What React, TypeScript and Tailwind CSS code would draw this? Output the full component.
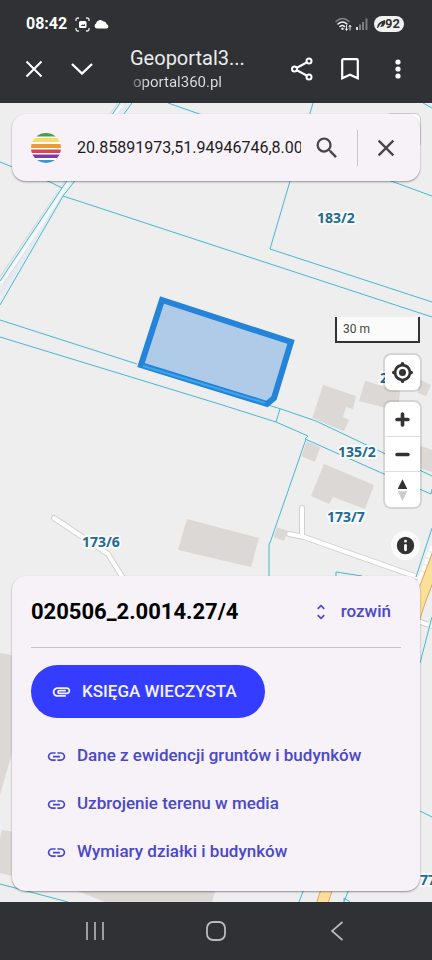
import type { ReactNode } from "react";
import { MdAttachment, MdClose, MdLink, MdSearch, MdUnfoldMore } from "react-icons/md";

const links = [
  "Dane z ewidencji gruntów i budynków",
  "Uzbrojenie terenu w media",
  "Wymiary działki i budynków",
];

const parcelLabels = [
  { x: 317, y: 223, text: "183/2" },
  { x: 380, y: 383, text: "20" },
  { x: 338, y: 457, text: "135/2" },
  { x: 327, y: 522, text: "173/7" },
  { x: 82, y: 547, text: "173/6" },
  { x: 420, y: 885, text: "77" },
];

const buildings = [
  "323,385 356,396 353,409 346,407 343,417 349,420 344,431 312,419",
  "365,381 400,391 398,411 359,401",
  "419,379 431,385 426,396 418,393",
  "418,445 432,450 432,472 418,468",
  "324,464 374,485 365,509 333,497 329,504 311,496",
  "306,440 321,445 315,462 301,456",
  "187,519 259,538 251,567 178,550",
  "276,527 288,531 284,541 273,537",
  "0,653 20,657 20,725 0,795",
  "2,830 30,834 30,880 0,873 0,838",
  "70,888 216,888 212,902 105,902",
];

const boundaries = [
  "120,103 62,188 0,281",
  "132,103 74,182 63,196 0,305",
  "63,196 432,317",
  "0,162 50,182 62,188",
  "168,103 391,181 432,196",
  "423,103 432,108",
  "313,103 270,249 432,302",
  "0,320 137,364",
  "0,337 216,403 276,422 308,436",
  "268,405 281,409 316,421 432,476",
  "280,409 276,422",
  "308,436 305,439 384,474 431,494 432,489",
  "306,439 271,540 269,545 269,580",
  "432,528 416,577",
  "336,580 336,572 362,576",
  "432,617 420,663",
  "420,811 432,817",
  "304,889 299,902",
  "349,889 344,902 344,898 350,902",
  "0,884 68,902",
];

function ParcelMap() {
  return (
    <svg
      className="absolute inset-0 h-full w-full bg-[#eeeeee]"
      viewBox="0 103 432 799"
      preserveAspectRatio="xMidYMid slice"
      role="img"
      aria-label="Mapa działek"
    >
      <path d="M122 103 L66 186 L0 283" fill="none" stroke="#cfd3d3" strokeWidth="8" />
      <path d="M122 103 L66 186 L0 283" fill="none" stroke="#f5f9f9" strokeWidth="6" />
      <path d="M127 103 L69 188 L0 294" fill="none" stroke="#e6e9f2" strokeWidth="4" />
      {buildings.map((points) => (
        <polygon key={points} points={points} fill="#dcd8d6" />
      ))}
      <g fill="none" strokeLinecap="round" strokeLinejoin="round">
        <g stroke="#d3d0ce" strokeWidth="6">
          <path d="M54 518 L108 554 L128 586" />
          <path d="M289 534 L304 537 L420 578" />
          <path d="M302 508 V536" />
          <path d="M414 620 L436 627" />
        </g>
        <g stroke="#ffffff" strokeWidth="4">
          <path d="M54 518 L108 554 L128 586" />
          <path d="M289 534 L304 537 L420 578" />
          <path d="M302 508 V536" />
          <path d="M414 620 L436 627" />
        </g>
      </g>
      <path d="M436 540 L418 588" stroke="#ffffff" strokeWidth="6" strokeDasharray="5 2" />
      <g fill="none">
        <path d="M440 548 L420 601 L322 904" stroke="#e3a565" strokeWidth="12" />
        <path d="M440 548 L420 601 L322 904" stroke="#fbe09a" strokeWidth="10" />
      </g>
      <g fill="none" stroke="#dbf3f7" strokeWidth="3">
        {boundaries.map((points) => (
          <polyline key={points} points={points} />
        ))}
      </g>
      <g fill="none" stroke="#69adbc" strokeWidth="1">
        {boundaries.map((points) => (
          <polyline key={points} points={points} />
        ))}
      </g>
      <polygon
        points="162,300 291,342 274,398 267,404 141,365"
        fill="#b0cbe7"
        stroke="#2484d9"
        strokeWidth="6"
      />
      <path d="M143 366 L265 403" stroke="#3fa6ea" strokeWidth="2" />
      <g
        className="font-['Noto_Sans',sans-serif] text-[14px] font-bold"
        fill="#28688e"
        stroke="#f6fbfd"
        strokeWidth="4"
        strokeLinejoin="round"
        paintOrder="stroke"
      >
        {parcelLabels.map((label) => (
          <text key={label.text} x={label.x} y={label.y}>
            {label.text}
          </text>
        ))}
      </g>
    </svg>
  );
}

function StatusBar() {
  return (
    <div className="flex h-12 items-center pr-7 pl-[26px]">
      <span className="text-base font-bold">08:42</span>
      <svg className="ml-2 size-[15px]" viewBox="0 0 15 15" fill="none" stroke="#e8e8e8" aria-hidden="true">
        <path d="M1 4V3Q1 1 3 1H4 M11 1H12Q14 1 14 3V4 M14 11V12Q14 14 12 14H11 M4 14H3Q1 14 1 12V11" strokeWidth="1.3" />
        <path fillRule="evenodd" d="M4 5.5Q4 4 5.5 4H10Q11.5 4 11.5 5.5V9.5Q11.5 11 10 11H5.500Q4 11 4 9.500Z M5.500 9H10V7L8.500 8L7.500 7.500Z" fill="#fff" stroke="none" />
      </svg>
      <svg className="ml-1 h-[10px] w-[15px]" viewBox="0 0 15 10" fill="#fff" aria-hidden="true">
        <path d="M3 9.500A2.600 2.600 0 0 1 2 4.600A4.300 4.300 0 0 1 9.500 2.500A3 3 0 0 1 12.500 5.300A2.200 2.200 0 0 1 13 9.500Z" />
      </svg>
      <svg className="ml-auto h-[15px] w-[17px]" viewBox="0 0 17 15" fill="none" strokeLinecap="round" aria-hidden="true">
        <path d="M1 4.500Q7.500 -1.500 14 4.500" stroke="#85878a" strokeWidth="1.500" />
        <path d="M3 7Q7.500 3 12 7 M5 9.500Q7.500 7.500 9.500 9.500" stroke="#eee" strokeWidth="1.600" />
        <circle cx="7.500" cy="11.800" r="1.200" fill="#eee" />
        <path d="M11.500 8.500V13 M10.200 11.800L11.500 13.300L12.800 11.800 M15 13V8.500 M13.800 9.800L15 8.300L16.200 9.800" stroke="#eee" strokeWidth="1" />
      </svg>
      <svg className="ml-1 h-[12px] w-[12px]" viewBox="0 0 12 12" aria-hidden="true">
        <rect x="0" y="9" width="2" height="3" fill="#ddd" />
        <rect x="3" y="6.500" width="2" height="5.500" fill="#7b7d80" />
        <rect x="6" y="4" width="2" height="8" fill="#7b7d80" />
        <rect x="9.500" y="0.500" width="2" height="11.500" fill="#7b7d80" />
      </svg>
      <span className="ml-1.5 flex h-4 items-center rounded-full bg-[#f1f1f1] pr-1 pl-[3px] text-[13px] leading-4 font-bold text-[#2f3135]">
        <svg className="size-2" viewBox="0 0 8 8" fill="#2f3135" aria-hidden="true">
          <path d="M0 8Q0 2 8 0Q9 7 3 7Q5 5 5 3Q2 5 1 8Z" />
        </svg>
        92
      </span>
    </div>
  );
}

function BrowserBar() {
  return (
    <div className="flex h-[55px] items-start pr-4 pl-4">
      <button type="button" aria-label="Zamknij kartę" className="mt-[3px] flex size-9 items-center justify-center">
        <svg className="size-[18px]" viewBox="0 0 18 18" fill="none" stroke="#fff" strokeWidth="2" aria-hidden="true">
          <path d="M1.500 1.500L16.500 16.500M16.500 1.500L1.500 16.500" />
        </svg>
      </button>
      <button type="button" aria-label="Minimalizuj" className="mt-[3px] ml-3 flex size-9 items-center justify-center">
        <svg className="h-3 w-[22px]" viewBox="0 0 22 12" fill="none" stroke="#fff" strokeWidth="2.400" aria-hidden="true">
          <path d="M1 1L11 10.500L21 1" />
        </svg>
      </button>
      <div className="ml-[30px] min-w-0 flex-1">
        <p className="-mt-0.5 truncate text-xl leading-6 text-[#ececec]">Geoportal3...</p>
        <p className="flex h-6 items-center pl-[3px] text-[15px]">
          <span className="bg-linear-to-r from-[#707276] to-[#e0e0e0] to-15% bg-clip-text text-transparent">oportal360.pl</span>
        </p>
      </div>
      <button type="button" aria-label="Udostępnij" className="mt-[3px] flex size-9 items-center justify-center">
        <svg className="size-6" viewBox="0 0 24 24" fill="none" stroke="#fff" strokeWidth="2" aria-hidden="true">
          <path d="M6.500 11L17.500 5M6.500 13L17.500 19" />
          <circle cx="4.500" cy="12" r="2.500" />
          <circle cx="19" cy="4" r="2.500" />
          <circle cx="19" cy="20" r="2.500" />
        </svg>
      </button>
      <button type="button" aria-label="Dodaj zakładkę" className="mt-[3px] ml-3 flex size-9 items-center justify-center">
        <svg className="h-[22px] w-[18px]" viewBox="0 0 18 22" fill="none" stroke="#fff" strokeWidth="2.200" aria-hidden="true">
          <path d="M1.200 20.300V2.500Q1.200 1.200 2.500 1.200H15.500Q16.800 1.200 16.800 2.500V20.300L9 16.800Z" />
        </svg>
      </button>
      <button type="button" aria-label="Więcej opcji" className="mt-[3px] ml-3 flex size-9 items-center justify-center">
        <svg className="h-5 w-[6px]" viewBox="0 0 6 20" fill="#fff" aria-hidden="true">
          <circle cx="3" cy="3" r="2.600" />
          <circle cx="3" cy="10" r="2.600" />
          <circle cx="3" cy="17" r="2.600" />
        </svg>
      </button>
    </div>
  );
}

function Logo() {
  return (
    <svg className="size-[30px] shrink-0" viewBox="0 0 30 30" aria-hidden="true">
      <clipPath id="sun">
        <circle cx="15" cy="15" r="15" />
      </clipPath>
      <g clipPath="url(#sun)">
        <rect width="30" height="30" fill="#fff" />
        <rect width="30" height="3.500" fill="#4b9b4d" />
        <rect y="5" width="30" height="4" fill="#f8d96c" />
        <rect y="11" width="30" height="4" fill="#ea9b37" />
        <rect y="16.500" width="30" height="3.500" fill="#db4352" />
        <rect y="21.500" width="30" height="3.500" fill="#7f3a9c" />
        <rect y="27" width="30" height="3" fill="#3f95cf" />
      </g>
    </svg>
  );
}

function MapButton({ label, children }: { label: string; children: ReactNode }) {
  return (
    <button type="button" aria-label={label} className="flex size-[35px] items-center justify-center text-[#333333]">
      {children}
    </button>
  );
}

function MapControls() {
  return (
    <div className="relative mt-auto mb-4 flex flex-col items-end">
      <div className="mb-3 h-[26px] w-[85px] border-2 border-t-0 border-[#333333] bg-white/75 pl-1.5 text-xs leading-6 text-[#444444]">
        30 m
      </div>
      <div className="mb-3 rounded-md bg-white ring-2 ring-black/10">
        <MapButton label="Moja lokalizacja">
          <svg className="size-[35px]" viewBox="0 0 20 20" fill="currentColor" aria-hidden="true">
            <path d="M10 4C9 4 9 5 9 5v.1A5 5 0 0 0 5.100 9H5s-1 0-1 1 1 1 1 1h.1A5 5 0 0 0 9 14.900v.1s0 1 1 1 1-1 1-1v-.1a5 5 0 0 0 3.900-3.900h.1s1 0 1-1-1-1-1-1h-.1A5 5 0 0 0 11 5.100V5s0-1-1-1m0 2.500a3.500 3.500 0 1 1 0 7 3.500 3.500 0 1 1 0-7" />
            <circle cx="10" cy="10" r="2" />
          </svg>
        </MapButton>
      </div>
      <div className="mb-6 flex flex-col divide-y divide-[#dddddd] rounded-md bg-white ring-2 ring-black/10">
        <MapButton label="Przybliż">
          <svg className="size-[35px]" viewBox="0 0 29 29" fill="currentColor" aria-hidden="true">
            <path d="M14.500 8.500c-.75 0-1.500.75-1.500 1.500v3h-3c-.75 0-1.500.75-1.500 1.500S9.250 16 10 16h3v3c0 .75.75 1.500 1.500 1.500S16 19.750 16 19v-3h3c.75 0 1.500-.75 1.500-1.500S19.750 13 19 13h-3v-3c0-.75-.75-1.500-1.500-1.500" />
          </svg>
        </MapButton>
        <MapButton label="Oddal">
          <svg className="size-[35px]" viewBox="0 0 29 29" fill="currentColor" aria-hidden="true">
            <path d="M10 13c-.75 0-1.500.75-1.500 1.500S9.250 16 10 16h9c.75 0 1.500-.75 1.500-1.500S19.750 13 19 13z" />
          </svg>
        </MapButton>
        <MapButton label="Obróć na północ">
          <svg className="size-[35px]" viewBox="0 0 29 29" fill="currentColor" aria-hidden="true">
            <path d="m10.500 14 4-8 4 8z" />
            <path d="m10.500 16 4 8 4-8z" fill="#cccccc" />
          </svg>
        </MapButton>
      </div>
      <button type="button" aria-label="Informacje o mapie" className="rounded-full bg-white/70 text-[#333333]">
        <svg className="size-[29px]" viewBox="0 0 20 20" fill="currentColor" fillRule="evenodd" aria-hidden="true">
          <path d="M4 10a6 6 0 1 0 12 0 6 6 0 1 0-12 0m5-3a1 1 0 1 0 2 0 1 1 0 1 0-2 0m0 3a1 1 0 1 1 2 0v3a1 1 0 1 1-2 0" />
        </svg>
      </button>
    </div>
  );
}

export default function App() {
  return (
    <div className="flex h-screen flex-col font-[Roboto,sans-serif]">
      <header className="bg-[#2f3135] text-white">
        <StatusBar />
        <BrowserBar />
      </header>

      <main className="relative flex min-h-0 flex-1 flex-col overflow-hidden px-3 pt-[11px] pb-[11px]">
        <ParcelMap />
        <div className="absolute top-2.5 right-[11px] size-9 rounded-md border border-[#cccccc] bg-white" />

        <form
          className="relative flex h-[67px] shrink-0 items-center rounded-[14px] bg-[#f6f2f8] pr-[18px] pl-[19px] shadow-[0_1px_2px_rgba(0,0,0,0.4)]"
          onSubmit={(event) => event.preventDefault()}
        >
          <Logo />
          <input
            type="text"
            aria-label="Szukaj działki"
            defaultValue="20.85891973,51.94946746,8.00"
            className="ml-4 min-w-0 flex-1 bg-transparent text-base text-[#1c1b1f] outline-none"
          />
          <button type="submit" aria-label="Szukaj" className="ml-2.5 flex size-8 items-center justify-center text-[#48464c]">
            <MdSearch className="size-7" />
          </button>
          <span className="mr-3 ml-3.5 h-9 w-px bg-[#c9c5cb]" />
          <button type="button" aria-label="Wyczyść" className="flex size-8 items-center justify-center text-[#48464c]">
            <MdClose className="size-7" />
          </button>
        </form>

        <MapControls />

        <section className="relative shrink-0 rounded-[14px] bg-[#f6f2f8] px-[19px] pb-[15px] shadow-[0_1px_2px_rgba(0,0,0,0.4)]">
          <div className="flex h-[72px] items-center justify-between border-b border-[#c5c1c8]">
            <h1 className="text-[22px] font-bold text-black">020506_2.0014.27/4</h1>
            <button type="button" className="flex items-center gap-2.5 pr-2.5 text-[17px] font-medium text-[#4a48c8]">
              <MdUnfoldMore className="size-5" />
              rozwiń
            </button>
          </div>
          <button
            type="button"
            className="mt-[17px] flex h-[53px] items-center gap-2.5 rounded-full bg-[#343dff] pr-7 pl-5 text-[17px] font-medium text-[#f4f2ff]"
          >
            <MdAttachment className="size-[21px]" />
            KSIĘGA WIECZYSTA
          </button>
          <ul className="mt-3.5">
            {links.map((text) => (
              <li key={text}>
                <a href="#" className="flex h-12 items-center gap-2.5 pl-[15px] text-[17px] font-medium text-[#4a48c8]">
                  <MdLink className="size-[21px]" />
                  {text}
                </a>
              </li>
            ))}
          </ul>
        </section>
      </main>

      <nav className="flex h-[58px] shrink-0 items-center justify-around bg-[#2f3135] px-[34px]">
        <button type="button" aria-label="Ostatnie aplikacje" className="flex size-9 items-center justify-center">
          <svg className="size-5" viewBox="0 0 20 20" fill="none" stroke="#b9babc" strokeWidth="1.600" aria-hidden="true">
            <path d="M2 1V19M10 1V19M18 1V19" />
          </svg>
        </button>
        <button type="button" aria-label="Ekran główny" className="flex size-9 items-center justify-center">
          <svg className="size-5" viewBox="0 0 20 20" fill="none" stroke="#b9babc" strokeWidth="1.800" aria-hidden="true">
            <rect x="1" y="1" width="18" height="18" rx="6" />
          </svg>
        </button>
        <button type="button" aria-label="Wstecz" className="flex size-9 items-center justify-center">
          <svg className="h-5 w-3" viewBox="0 0 12 20" fill="none" stroke="#b9babc" strokeWidth="1.700" aria-hidden="true">
            <path d="M11.500 1L1 10L11.500 19" />
          </svg>
        </button>
      </nav>
    </div>
  );
}
